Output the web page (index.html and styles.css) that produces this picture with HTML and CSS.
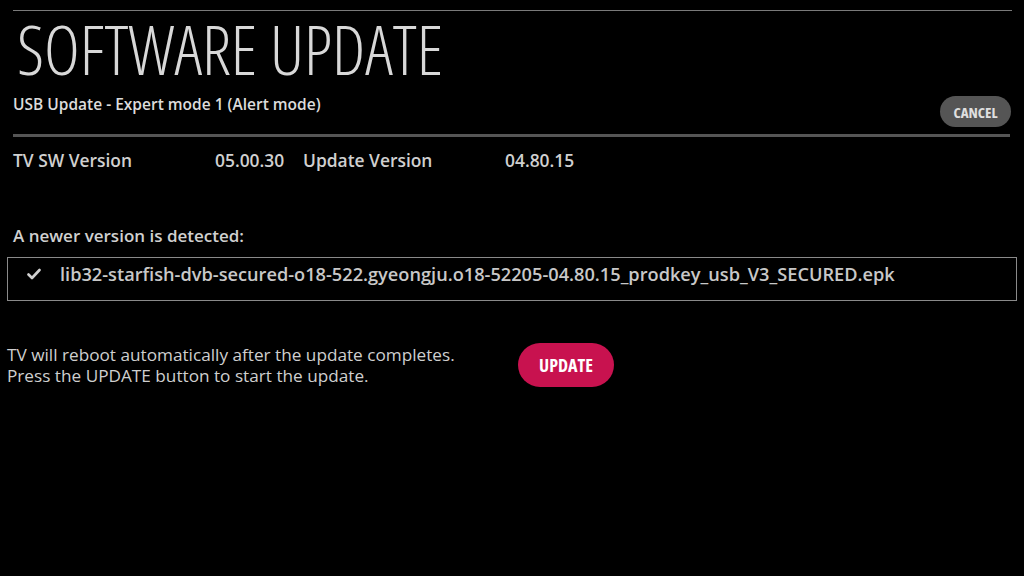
FILE: index.html
```html
<!DOCTYPE html>
<html>
<head>
    <title>Software Update</title>
    <meta name="viewport" content="width=device-width, initial-scale=1.0">
    <link rel="stylesheet" href="styles.css">
</head>
<body>
    <div id="screen">
        <div class="top-rule"></div>
        <h1 class="title">SOFTWARE UPDATE</h1>
        <div class="header-row">
            <p class="subtitle">USB Update - Expert mode 1 (Alert mode)</p>
            <button class="cancel-btn"><span>CANCEL</span></button>
        </div>
        <div class="header-rule"></div>

        <div class="versions">
            <span class="v-label">TV SW Version</span>
            <span class="v-value">05.00.30</span>
            <span class="v-label v-update">Update Version</span>
            <span class="v-value v-new">04.80.15</span>
        </div>

        <p class="detected">A newer version is detected:</p>
        <div class="file-box">
            <svg class="check" width="14" height="12" viewBox="0 0 14 12">
                <path d="M1.5 6.5 L5 10 L12.5 2" fill="none" stroke="#d0d0d0" stroke-width="2.6" stroke-linecap="round" stroke-linejoin="round"/>
            </svg>
            <span class="file-name">lib32-starfish-dvb-secured-o18-522.gyeongju.o18-52205-04.80.15_prodkey_usb_V3_SECURED.epk</span>
        </div>

        <div class="action-row">
            <p class="notice">TV will reboot automatically after the update completes.<br>Press the UPDATE button to start the update.</p>
            <button class="update-btn"><span>UPDATE</span></button>
        </div>
    </div>
</body>
</html>
```

FILE: styles.css
```css
body {
    margin: 0;
    background-color: #000;
    color: #d4d4d4;
    font-family: 'Open Sans', 'Lato', sans-serif;
}

#screen {
    width: 1024px;
    height: 576px;
    padding-top: 10px;
    box-sizing: border-box;
}

.top-rule {
    height: 1px;
    margin: 0 12px 0 13px;
    background-color: #7a7a7a;
}

/* condensed TV title face */
.title {
    margin: 8px 0 0 17px;
    font-family: 'Open Sans', sans-serif;
    font-weight: 300;
    font-stretch: 75%;
    font-size: 68px;
    line-height: 59px;
    color: #d8d8d8;
    white-space: nowrap;
}

.header-row {
    display: flex;
    justify-content: space-between;
    align-items: flex-start;
    margin: 0 13px 0 13px;
    height: 56px;
}

.subtitle {
    margin: 15px 0 0 0;
    font-size: 15.5px;
    font-weight: 600;
    color: #dcdcdc;
}

button {
    border: none;
    cursor: pointer;
    font-family: 'Open Sans', sans-serif;
    font-weight: 700;
    font-stretch: 75%;
    padding: 0;
}

.cancel-btn {
    margin-top: 18px;
    width: 71px;
    height: 31px;
    border-radius: 16px;
    background-color: #555;
    color: #e0e0e0;
    font-size: 15px;
}

.header-rule {
    height: 3px;
    margin: 0 14px 0 13px;
    background-color: #555;
}

.versions {
    display: flex;
    align-items: center;
    margin: 11px 0 0 13px;
    font-size: 17.4px;
    font-weight: 600;
    color: #d0d0d0;
}

.v-label {
    width: 202px;
}

.v-value {
    width: 88px;
}

.v-update {
    width: 202px;
}

.detected {
    margin: 52px 0 0 13px;
    font-size: 17px;
    font-weight: 600;
    color: #d0d0d0;
}

.file-box {
    display: flex;
    align-items: center;
    gap: 19px;
    margin: 10px 7px 0 7px;
    height: 32px;
    padding: 0 0 10px 19px;
    border: 1.5px solid #8a8a8a;
}

.file-name {
    font-size: 18.2px;
    font-weight: 600;
    color: #c8c8c8;
}

.action-row {
    display: flex;
    align-items: center;
    margin: 42px 0 0 7px;
}

.notice {
    margin: 0;
    width: 511px;
    font-size: 17.2px;
    font-weight: 400;
    line-height: 21px;
    color: #cfcfcf;
}

.update-btn {
    width: 96px;
    height: 44px;
    border-radius: 22px;
    background-color: #c8124f;
    color: #fff;
    font-size: 18px;
}
```
